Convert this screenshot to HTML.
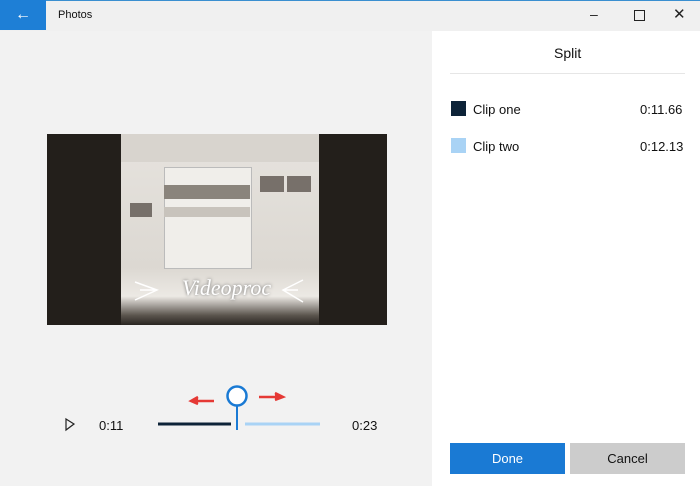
<!DOCTYPE html>
<html><head><style>
body{margin:0;width:700px;height:486px;background:#f2f2f2;font-family:"Liberation Sans",sans-serif;position:relative;overflow:hidden}
.a{position:absolute}
</style></head><body>
<div class="a" style="left:0;top:0;width:700px;height:31px;background:#f0f0f0;border-top:1px solid #3a8fd0;box-sizing:border-box"></div>
<div class="a" style="left:0;top:0;width:46px;height:30px;background:#1e7fd6;color:#fff;font-size:16px;text-align:center;line-height:30px">←</div>
<div class="a" style="left:58px;top:9px;font-size:11px;color:#111">Photos</div>
<div class="a" style="left:590px;top:6px;font-size:14px;color:#222">–</div>
<div class="a" style="left:634px;top:10px;width:9px;height:9px;border:1px solid #222"></div>
<div class="a" style="left:673px;top:5px;font-size:15px;color:#222">✕</div>
<div class="a" style="left:432px;top:31px;width:268px;height:455px;background:#fff"></div>
<div class="a" style="left:554px;top:45px;font-size:14px;color:#111">Split</div>
<div class="a" style="left:450px;top:73px;width:235px;height:1px;background:#e6e6e6"></div>
<div class="a" style="left:451px;top:101px;width:15px;height:15px;background:#0d2338"></div>
<div class="a" style="left:473px;top:102px;font-size:13px;color:#111">Clip one</div>
<div class="a" style="left:640px;top:102px;font-size:13px;color:#111">0:11.66</div>
<div class="a" style="left:451px;top:138px;width:15px;height:15px;background:#a9d3f5"></div>
<div class="a" style="left:473px;top:139px;font-size:13px;color:#111">Clip two</div>
<div class="a" style="left:640px;top:139px;font-size:13px;color:#111">0:12.13</div>
<div class="a" style="left:450px;top:443px;width:115px;height:31px;background:#1a7ad4;color:#fff;font-size:13px;text-align:center;line-height:31px">Done</div>
<div class="a" style="left:570px;top:443px;width:115px;height:31px;background:#ccc;color:#111;font-size:13px;text-align:center;line-height:31px">Cancel</div>
<div class="a" style="left:47px;top:134px;width:340px;height:191px;background:#231f1b"></div>
<div class="a" style="left:121px;top:134px;width:198px;height:191px;background:linear-gradient(#e6e3de,#dcd8d2 70%,#ece9e4 85%,#5a544d 95%,#2a2622)"></div>
<div class="a" style="left:121px;top:134px;width:198px;height:28px;background:#d8d4ce"></div>
<div class="a" style="left:164px;top:167px;width:86px;height:100px;background:#f0eeea;border:1px solid #bbb"></div>
<div class="a" style="left:164px;top:185px;width:86px;height:14px;background:#8a847c"></div>
<div class="a" style="left:164px;top:207px;width:86px;height:10px;background:#c8c3bc"></div>
<div class="a" style="left:260px;top:176px;width:24px;height:16px;background:#77706a"></div>
<div class="a" style="left:287px;top:176px;width:24px;height:16px;background:#77706a"></div>
<div class="a" style="left:130px;top:203px;width:22px;height:14px;background:#77706a"></div>
<div class="a" style="left:182px;top:275px;font-family:'Liberation Serif',serif;font-style:italic;font-size:22px;color:#fff;text-shadow:0 0 3px #666">Videoproc</div>
<svg class="a" style="left:0;top:0" width="700" height="486">
<path d="M135 282 L157 290 L135 300 M140 290 L157 290" stroke="#fff" fill="none" stroke-width="1.5"/>
<path d="M303 280 L283 290 L303 302 M298 290 L283 290" stroke="#fff" fill="none" stroke-width="1.5"/>
<path d="M66 419 L74 424 L66 430 Z" stroke="#222" fill="none" stroke-width="1.2"/>
<line x1="158" y1="424" x2="231" y2="424" stroke="#0d2338" stroke-width="3"/>
<line x1="245" y1="424" x2="320" y2="424" stroke="#a9d3f5" stroke-width="3"/>
<line x1="237" y1="405" x2="237" y2="430" stroke="#1a7ad4" stroke-width="2"/>
<circle cx="237" cy="396" r="9.5" fill="#fff" stroke="#1a7ad4" stroke-width="2.5"/>
<path d="M214 401 L192 401 M198 397 L191 401 L198 404" stroke="#e53935" stroke-width="2.5" fill="#e53935"/>
<path d="M259 397 L281 397 M275 393 L283 397 L275 400" stroke="#e53935" stroke-width="2.5" fill="#e53935"/>
</svg>
<div class="a" style="left:99px;top:418px;font-size:13px;color:#111">0:11</div>
<div class="a" style="left:352px;top:418px;font-size:13px;color:#111">0:23</div>
</body></html>
